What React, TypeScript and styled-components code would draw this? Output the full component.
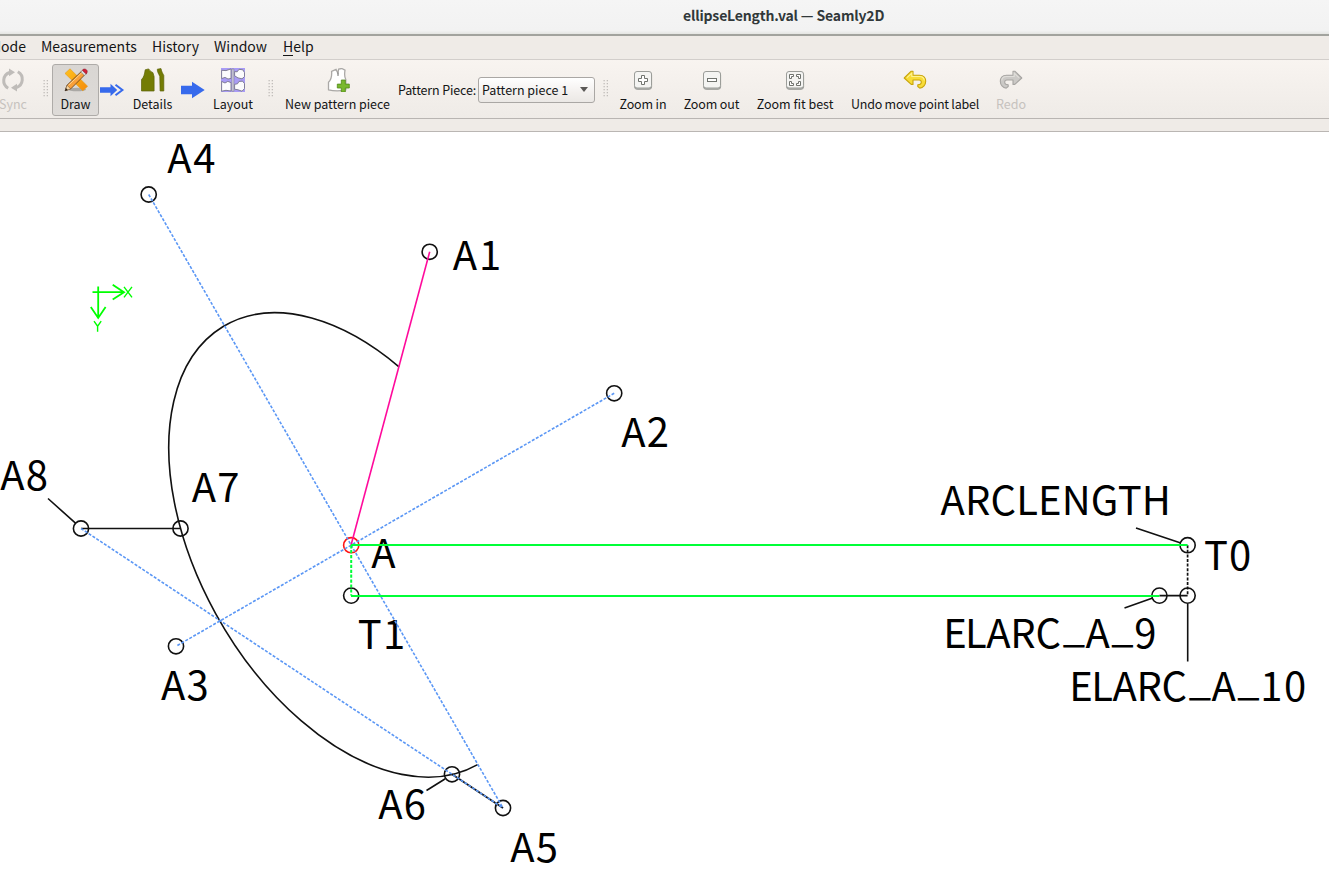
import React from "react";
import styled, { createGlobalStyle } from "styled-components";

const Global = createGlobalStyle`
  body { margin: 0; background: #fff; overflow: hidden; }
  * { box-sizing: border-box; }
`;

const Window = styled.div`
  width: 1329px;
  height: 894px;
  display: flex;
  flex-direction: column;
  overflow: hidden;
  font-family: "Noto Sans CJK SC", "Noto Sans", sans-serif;
  color: #141516;
`;

const TitleBar = styled.header`
  height: 36px;
  flex: none;
  padding: 0 0 4px 683px;
  display: flex;
  align-items: center;
  background: linear-gradient(#f5f5f5, #f2f2f2 90%, #e4e5e2);
  border-bottom: 2px solid #a2a39e;
  font-size: 14px;
  font-weight: 700;
  letter-spacing: -0.16px;
  color: #31383a;
  white-space: nowrap;
`;

const MenuBar = styled.nav`
  height: 24px;
  flex: none;
  padding-bottom: 3px;
  display: flex;
  align-items: center;
  gap: 15px;
  background: #efebe7;
  border-bottom: 1px solid #d2cecb;
  font-size: 14px;
  line-height: 20px;
  white-space: nowrap;
`;

const MenuItem = styled.span<{ $width: number; $end?: boolean }>`
  width: ${(p) => p.$width}px;
  display: flex;
  justify-content: ${(p) => (p.$end ? "flex-end" : "flex-start")};
`;

const Mnemonic = styled.span`
  height: 20px;
  border-bottom: 1px solid #141516;
`;

const ToolBar = styled.div`
  height: 59px;
  flex: none;
  display: flex;
  align-items: stretch;
  background: linear-gradient(#f8f4f0, #efebe7);
  border-bottom: 1px solid #b9b5b2;
`;

const ToolButton = styled.div<{ $width: number; $disabled?: boolean; $offset?: number }>`
  width: ${(p) => p.$width}px;
  margin-left: ${(p) => p.$offset ?? 0}px;
  flex: none;
  padding-top: 8px;
  display: flex;
  flex-direction: column;
  align-items: center;
  color: ${(p) => (p.$disabled ? "#c6c2be" : "#141516")};
`;

const ActiveButton = styled(ToolButton)`
  height: 52px;
  margin: 4px 0 0 3px;
  padding-top: 3px;
  background: linear-gradient(#d9d6d3, #dedbd8);
  border: 1px solid #aeaba8;
  border-radius: 3px;
`;

const ButtonLabel = styled.span<{ $spacing?: number }>`
  margin-top: 3px;
  font-size: 12.5px;
  line-height: 18px;
  white-space: nowrap;
  letter-spacing: ${(p) => p.$spacing ?? 0}px;
`;

const Handle = styled.div<{ $width: number }>`
  width: ${(p) => p.$width}px;
  flex: none;
  display: flex;
  align-items: center;
  justify-content: center;
`;

const FlowArrow = styled.div`
  width: 26px;
  flex: none;
  display: flex;
  align-items: center;
  justify-content: center;
  padding-top: 2px;
`;

const FieldLabel = styled.label`
  width: 80px;
  margin-left: 5px;
  flex: none;
  padding-top: 21px;
  font-size: 12.5px;
  line-height: 18px;
  letter-spacing: -0.15px;
  white-space: nowrap;
`;

const Select = styled.div`
  width: 117px;
  height: 26px;
  margin-top: 17px;
  flex: none;
  padding: 0 6px 1px 3px;
  display: flex;
  align-items: center;
  justify-content: space-between;
  background: linear-gradient(#ffffff, #f3f0ee 60%, #ebe8e5);
  border: 1px solid #aaa7a4;
  border-radius: 3px;
  font-size: 12.5px;
  white-space: nowrap;
`;

const Strip = styled.div`
  height: 13px;
  flex: none;
  background: #efebe7;
  border-bottom: 1px solid #bab6b3;
`;

const Canvas = styled.main`
  flex: 1;
  background: #fff;
`;

const Drawing = styled.svg`
  display: block;
  overflow: visible;
  text {
    font-family: "Noto Sans CJK SC", "Noto Sans", sans-serif;
    font-size: 40px;
    fill: #000;
  }
`;

const Dots = () => (
  <svg width="6" height="18" viewBox="0 0 6 18" fill="#c1bdba">
    {[0, 3, 6, 9, 12, 15].map((y) => (
      <g key={y}>
        <rect x="0.5" y={y} width="1.3" height="1.3" />
        <rect x="3.7" y={y} width="1.3" height="1.3" />
      </g>
    ))}
  </svg>
);

const SyncIcon = () => (
  <svg width="24" height="24" viewBox="0 0 24 24" fill="none" stroke="#bfbcb9" strokeWidth="3">
    <path d="M7.2 20.2A8.6 8.6 0 0 1 8.6 4.5" />
    <path d="M16.8 3.8A8.6 8.6 0 0 1 15.4 19.5" />
    <path d="M8 .5L14 4.3 8 8.2zM16 15.8L10 19.7 16 23.5z" fill="#bfbcb9" stroke="none" />
  </svg>
);

const DrawIcon = () => (
  <svg width="24" height="24" viewBox="0 0 24 24">
    <defs>
      <linearGradient id="ruler" x1="0" y1="0" x2="1" y2="1">
        <stop offset="0" stopColor="#ffc21e" />
        <stop offset="1" stopColor="#f58a0a" />
      </linearGradient>
    </defs>
    <ellipse cx="13" cy="21.5" rx="9" ry="1.8" fill="#aaa8a5" />
    <path d="M6 .8L23.6 18.2 18.8 22.8 1 5.4z" fill="url(#ruler)" stroke="#e59a16" strokeWidth=".6" />
    <path d="M1.2 22.7L3 17.2 17.5 3.3 20.9 6.7 6.7 20.9z" fill="#f9a03a" stroke="#5b3d1d" strokeWidth=".8" />
    <path d="M4.5 17.3L18 4.5" stroke="#ffd28b" strokeWidth="1" />
    <path d="M1.2 22.7L3 17.2 6.7 20.9z" fill="#f4d6a5" stroke="#735338" strokeWidth=".5" />
    <path d="M1 22.9l.9-2.8 1.9 1.9z" fill="#25211f" />
    <path d="M16.8 4l1.8-1.8 3.6 3.5-1.8 1.8z" fill="#d9dcde" stroke="#777" strokeWidth=".5" />
    <path d="M18.3 2.2C20-.4 25.3 1.7 22.3 6z" fill="#d51e38" stroke="#891a2c" strokeWidth=".6" />
  </svg>
);

const DetailsIcon = () => (
  <svg width="24" height="24" viewBox="0 0 24 24" fill="#747c04" stroke="#5d6308" strokeWidth=".7">
    <path d="M.5 23V11.5C2.8 9.5 3.5 6.5 4.2 1.8L7.6.9C9.1 3 10.7 4 11.9 4.6L13.1 8.5V23z" />
    <path d="M16.3 1.2L20 .6C20.7 4 21.8 5.5 22.8 7.5V23H19.1L18.8 8.5C17.9 6 16.2 4.2 16.3 1.2z" />
  </svg>
);

const LayoutIcon = () => (
  <svg width="24" height="24" viewBox="0 0 24 24">
    <path d="M0 0H24V24H0z" fill="#a99cf5" />
    <g fill="#fbfbfd" stroke="#77758c" strokeWidth=".9">
      <path d="M.6 2.3L5 2.6 10 .9V10.4L7 11 4 9.4.6 10.6z" />
      <path d="M13.6 3.6L16.2 3.8 18 1.3 21.8 1.8 23.5 4.6V8.6L21 10.8 17 9.9 13.6 7.8z" />
      <path d="M.6 13.4L4 15 6.8 13.4 10 14.6V23L5 22.3.6 23.2z" />
      <path d="M13.6 16.3L16.5 15.8 18 13.4 21.6 13.2 23.5 15.6V20.6L21 23.2 17 21.8 13.6 21.2z" />
    </g>
    <path d="M10.9 1H12.9V23.3H10.9z" fill="#d9d8e4" stroke="#858399" strokeWidth=".7" />
  </svg>
);

const NewPieceIcon = () => (
  <svg width="24" height="24" viewBox="0 0 24 24">
    <path
      d="M2.5 21.8V14.2C5.5 11.5 6 8 5.6 3.4L10 1.4 11.9 5.2 12.7 1 15.8.5 19 2.2C18.3 6.5 18.5 9.3 19.8 11.5V21.8C14 23.2 8 23.2 2.5 21.8z"
      fill="#fff"
      stroke="#aaa8a6"
      strokeWidth="1.3"
    />
    <path d="M12 4.5V8" stroke="#777" />
    <path d="M15.3 12H19.3V16.1H23.3V20H19.3V24H15.3V20H11.3V16.1H15.3z" fill="#79b82d" stroke="#528919" strokeWidth=".8" />
  </svg>
);

const ZoomIcon = ({ kind }: { kind: "in" | "out" | "fit" }) => (
  <svg width="24" height="24" viewBox="0 0 24 24" fill="none" stroke="#70736e" strokeWidth="1">
    <rect x="3.6" y="4.3" width="17" height="17" rx="2.5" fill="#b7b8b5" stroke="#999a97" />
    <rect x="3.5" y="3.5" width="17" height="16.5" rx="2.5" fill="#f4f4f2" stroke="#9b9d99" />
    {kind === "in" && <path d="M10.5 7.5h3v3h3v3h-3v3h-3v-3h-3v-3h3z" fill="#fff" />}
    {kind === "out" && <rect x="7.5" y="10.5" width="9" height="3" fill="#fff" />}
    {kind === "fit" && (
      <path
        d="M6.5 10.5v-4h4v2h-2v2zM13.5 6.5h4v4h-2v-2h-2zM6.5 13.5v4h4v-2h-2v-2zM17.5 13.5v4h-4v-2h2v-2z"
        fill="#fff"
      />
    )}
  </svg>
);

const TurnIcon = ({ redo }: { redo?: boolean }) => (
  <svg width="24" height="24" viewBox="0 0 24 24">
    <g transform={redo ? "translate(24 0) scale(-1 1)" : undefined}>
      <path
        d="M1.2 10L8.2 3.2H10V7.2H16.5C21 7.2 22.7 10.5 22.7 13.3 22.7 16.8 20.2 19.8 16.8 20.1L14.8 18.5V16.8C17.4 16.7 18.3 15.3 18.3 14 18.3 12.7 17.5 12 16 12H10V16.4H8.2z"
        fill={redo ? "#cbc9c6" : "#f8dc37"}
        stroke={redo ? "#a7a5a2" : "#c7a40b"}
        strokeWidth="1.1"
        strokeLinejoin="round"
      />
      <path d="M4 9.7L8.8 5.2V8.5H16.5C19.4 8.5 21 10.2 21.3 12.5" fill="none" stroke={redo ? "#e0deda" : "#fff391"} strokeWidth="1.1" />
    </g>
  </svg>
);

type Point = [number, number];

const points: Point[] = [
  [148.7, 194.5], [429.7, 251.8], [614.2, 393.3], [81, 528.5], [180.5, 528.5], [176, 646.3],
  [351.2, 595.6], [452, 774.3], [503, 808], [1187.6, 545.2], [1159.4, 595.6], [1187.6, 595.6],
];

const labels: { text: string; x: number; y: number; spacing?: number }[] = [
  { text: "A4", x: 167.3, y: 172.5, spacing: 1.6 },
  { text: "A1", x: 452.8, y: 269.5, spacing: 1.8 },
  { text: "A2", x: 621.3, y: 447.3, spacing: 1.2 },
  { text: "A7", x: 191.8, y: 501.7, spacing: 1.2 },
  { text: "A8", x: 0.3, y: 490.3, spacing: 1.2 },
  { text: "A3", x: 161, y: 700.3, spacing: 1.2 },
  { text: "A", x: 371.3, y: 568.3 },
  { text: "T1", x: 357.8, y: 649, spacing: 1.2 },
  { text: "ARCLENGTH", x: 940.5, y: 515, spacing: 0.15 },
  { text: "T0", x: 1204, y: 569.8, spacing: 1 },
  { text: "A6", x: 378.3, y: 819, spacing: 1.2 },
  { text: "A5", x: 510.3, y: 861.7, spacing: 1.2 },
];

/* Formula names: glyph origins are listed so underscores can sit on the baseline. */
const formulas: { text: string; y: number; xs: number[] }[] = [
  { text: "ELARC_A_9", y: 648, xs: [943.2, 965, 986.3, 1010.3, 1035.5, 1062.8, 1085.5, 1111.2, 1134.3] },
  { text: "ELARC_A_10", y: 700.7, xs: [1069.2, 1091.2, 1112.5, 1136.5, 1161.5, 1188.8, 1211.5, 1237.2, 1260.2, 1284] },
];

const Diagram = () => (
  <Drawing width="1329" height="762" viewBox="0 132 1329 762">
    {labels.map((l) => (
      <text key={l.text} x={l.x} y={l.y} letterSpacing={l.spacing}>{l.text}</text>
    ))}
    {formulas.map((f) => (
      <text key={f.text}>
        {f.text.split("").map((c, i) => (
          <tspan key={i} x={f.xs[i]} y={c === "_" ? f.y - 6 : f.y}>{c}</tspan>
        ))}
      </text>
    ))}
    <g fill="none" stroke="#111" strokeWidth="1.6">
      <path d="M399 366.8A253.3 152 60 1 0 477.6 764.6" />
      <path d="M48 498.5L75.5 523.2M81 528.5H180.3M1136 528L1180 542.7M1124.5 608L1152 598.3M1159.4 595.6H1187.6M1187.7 604V661.5M426.5 790.5L445.3 778.7" />
      <path d="M452 774.3L503 808" strokeWidth="1.8" />
      <path d="M1187.6 545.2V595.6" strokeDasharray="3 1.6" strokeWidth="1.7" />
      {points.map(([x, y]) => (
        <circle key={`${x}-${y}`} cx={x} cy={y} r="7.6" />
      ))}
      <circle cx="351.2" cy="545.2" r="7.6" stroke="#ff1414" />
    </g>
    <g fill="none" stroke="#5b97f5" strokeWidth="1.6" strokeDasharray="3 1.6">
      <path d="M148.7 194.5L503 808M614.2 393.3L176 646.3M81 528.5L503 808" />
    </g>
    <path d="M429.7 251.8L351 545.2" stroke="#ff0a9b" strokeWidth="1.6" />
    <g fill="none" stroke="#00ff37" strokeWidth="2">
      <path d="M351 545H1187.6M351 596H1159.4" />
      <path d="M351.2 545.2V595.6" strokeDasharray="3.2 1.7" />
    </g>
    <g fill="none" stroke="#00ff00" strokeWidth="1.8">
      <path d="M92.5 292.2H124M98.2 286.5V318M112.7 284.8L124 292.2 112.7 299.5M90.8 307L98.2 318 105.6 307" />
      <path d="M124 286.8L132 297.4M132 286.8L124 297.4M94 321.2L97.6 326.2 101.2 321.2M97.6 326.2V331.8" strokeWidth="1.4" />
    </g>
  </Drawing>
);

export default function App() {
  return (
    <Window>
      <Global />
      <TitleBar>ellipseLength.val — Seamly2D</TitleBar>
      <MenuBar>
        <MenuItem $width={26} $end>Mode</MenuItem>
        <MenuItem $width={96}>Measurements</MenuItem>
        <MenuItem $width={47}>History</MenuItem>
        <MenuItem $width={54}>Window</MenuItem>
        <MenuItem $width={32}><Mnemonic>H</Mnemonic>elp</MenuItem>
      </MenuBar>
      <ToolBar>
        <ToolButton $width={60} $offset={-17} $disabled><SyncIcon /><ButtonLabel>Sync</ButtonLabel></ToolButton>
        <Handle $width={6}><Dots /></Handle>
        <ActiveButton $width={47}><DrawIcon /><ButtonLabel>Draw</ButtonLabel></ActiveButton>
        <FlowArrow>
          <svg width="26" height="18" viewBox="0 0 26 18">
            <path d="M1 6.2H11.5V2.7L18.2 9 11.5 15.3V11.8H1z" fill="#376aec" />
            <path d="M16.5 3.8L23.4 9 16.5 14.2" fill="none" stroke="#376aec" strokeWidth="2" />
          </svg>
        </FlowArrow>
        <ToolButton $width={55}><DetailsIcon /><ButtonLabel>Details</ButtonLabel></ToolButton>
        <FlowArrow>
          <svg width="26" height="18" viewBox="0 0 26 18">
            <path d="M1 4.7H12V.7L24.7 9 12 17.3V13.3H1z" fill="#376aec" />
          </svg>
        </FlowArrow>
        <ToolButton $width={54}><LayoutIcon /><ButtonLabel>Layout</ButtonLabel></ToolButton>
        <Handle $width={22}><Dots /></Handle>
        <ToolButton $width={111}><NewPieceIcon /><ButtonLabel $spacing={-0.04}>New pattern piece</ButtonLabel></ToolButton>
        <FieldLabel>Pattern Piece:</FieldLabel>
        <Select>
          Pattern piece 1
          <svg width="8" height="5" viewBox="0 0 8 5"><path d="M0 0H8L4 5z" fill="#5b5957" /></svg>
        </Select>
        <Handle $width={22}><Dots /></Handle>
        <ToolButton $width={52}><ZoomIcon kind="in" /><ButtonLabel $spacing={-0.15}>Zoom in</ButtonLabel></ToolButton>
        <ToolButton $width={85}><ZoomIcon kind="out" /><ButtonLabel $spacing={-0.15}>Zoom out</ButtonLabel></ToolButton>
        <ToolButton $width={82}><ZoomIcon kind="fit" /><ButtonLabel>Zoom fit best</ButtonLabel></ToolButton>
        <ToolButton $width={158}><TurnIcon /><ButtonLabel $spacing={-0.22}>Undo move point label</ButtonLabel></ToolButton>
        <ToolButton $width={34} $disabled><TurnIcon redo /><ButtonLabel>Redo</ButtonLabel></ToolButton>
      </ToolBar>
      <Strip />
      <Canvas><Diagram /></Canvas>
    </Window>
  );
}
